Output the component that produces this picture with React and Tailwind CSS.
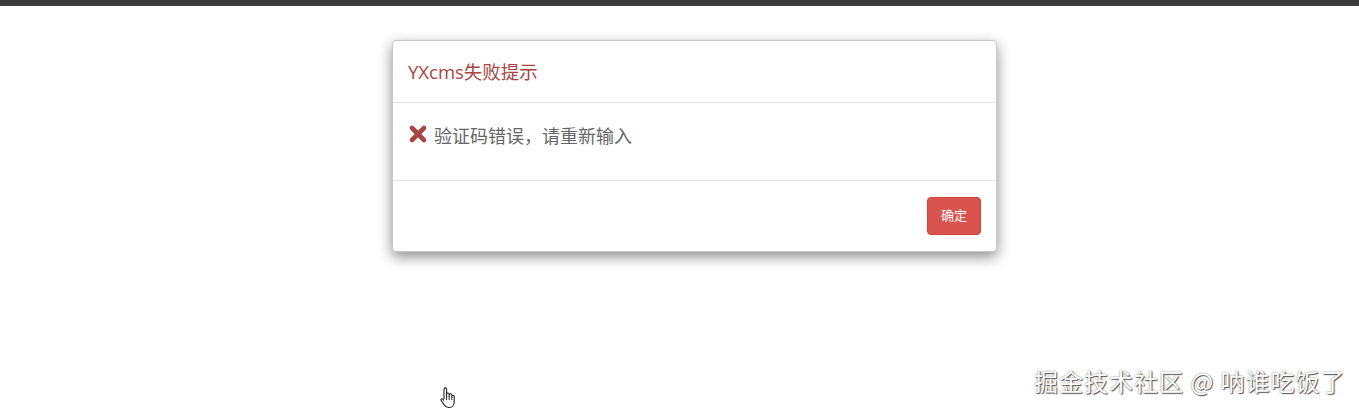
import React from 'react';

const font = { fontFamily: '"Open Sans", "Noto Sans CJK SC", sans-serif' };

const HandCursor = () => (
  <svg width="18" height="24" viewBox="0 0 18 24" className="absolute left-[439px] top-[386px]">
    <path
      d="M5 13V3.2a1.3 1.3 0 0 1 2.6 0V10V8.3a1.3 1.3 0 0 1 2.6 0V10.5V9.1a1.3 1.3 0 0 1 2.6 0v2V10.4a1.2 1.2 0 0 1 2.4 0V16c0 3-2 5.5-5 5.5H9.5c-2 0-3.2-1-4.3-2.6L2 14.3c-.6-.9.4-2 1.4-1.4L5 14.5"
      fill="#fff"
      stroke="#222"
      strokeWidth="1.1"
      strokeLinejoin="round"
    />
    <path d="M7.6 10v4M10.2 10.5v3.5M12.8 11v3" stroke="#222" strokeWidth="1" />
  </svg>
);

export default function App() {
  return (
    <div className="relative w-[1359px] h-[410px] bg-white overflow-hidden" style={font}>
      <div className="h-[6px] bg-[#3b3b3b]" />
      <div className="flex justify-center pt-[34px] pl-[30px]">
        <div className="w-[605px] bg-white border border-[#c8c8c8] rounded-[4px] shadow-[0_5px_14px_rgba(0,0,0,0.45)]">
          <div className="h-[62px] flex items-center px-[15px] border-b border-[#e5e5e5]">
            <h4 className="text-[18.5px] text-[#a94442]">YXcms失败提示</h4>
          </div>
          <div className="h-[78px] px-[15px] pt-[20px] border-b border-[#e5e5e5]">
            <div className="flex items-center gap-[6px] text-[18px] text-[#666]">
              <svg width="20" height="20" viewBox="0 0 20 20" className="-mt-[6px]">
                <path d="M4 4 16 16M16 4 4 16" stroke="#a94442" strokeWidth="4.6" strokeLinecap="round" />
              </svg>
              <span>验证码错误，请重新输入</span>
            </div>
          </div>
          <div className="h-[70px] flex items-center justify-end px-[15px]">
            <button className="h-[38px] px-[13px] bg-[#d9534f] text-white text-[13px] rounded-[4px] border border-[#d43f3a]">
              确定
            </button>
          </div>
        </div>
      </div>
      <div
        className="absolute left-[1034px] top-[363px] text-[24px] text-white tracking-[1px]"
        style={{ textShadow: '1px 1px 1px #555, 0 0 2px #777', fontFamily: '"Noto Sans CJK SC", sans-serif' }}
      >
        掘金技术社区 @ 呐谁吃饭了
      </div>
      <HandCursor />
    </div>
  );
}
